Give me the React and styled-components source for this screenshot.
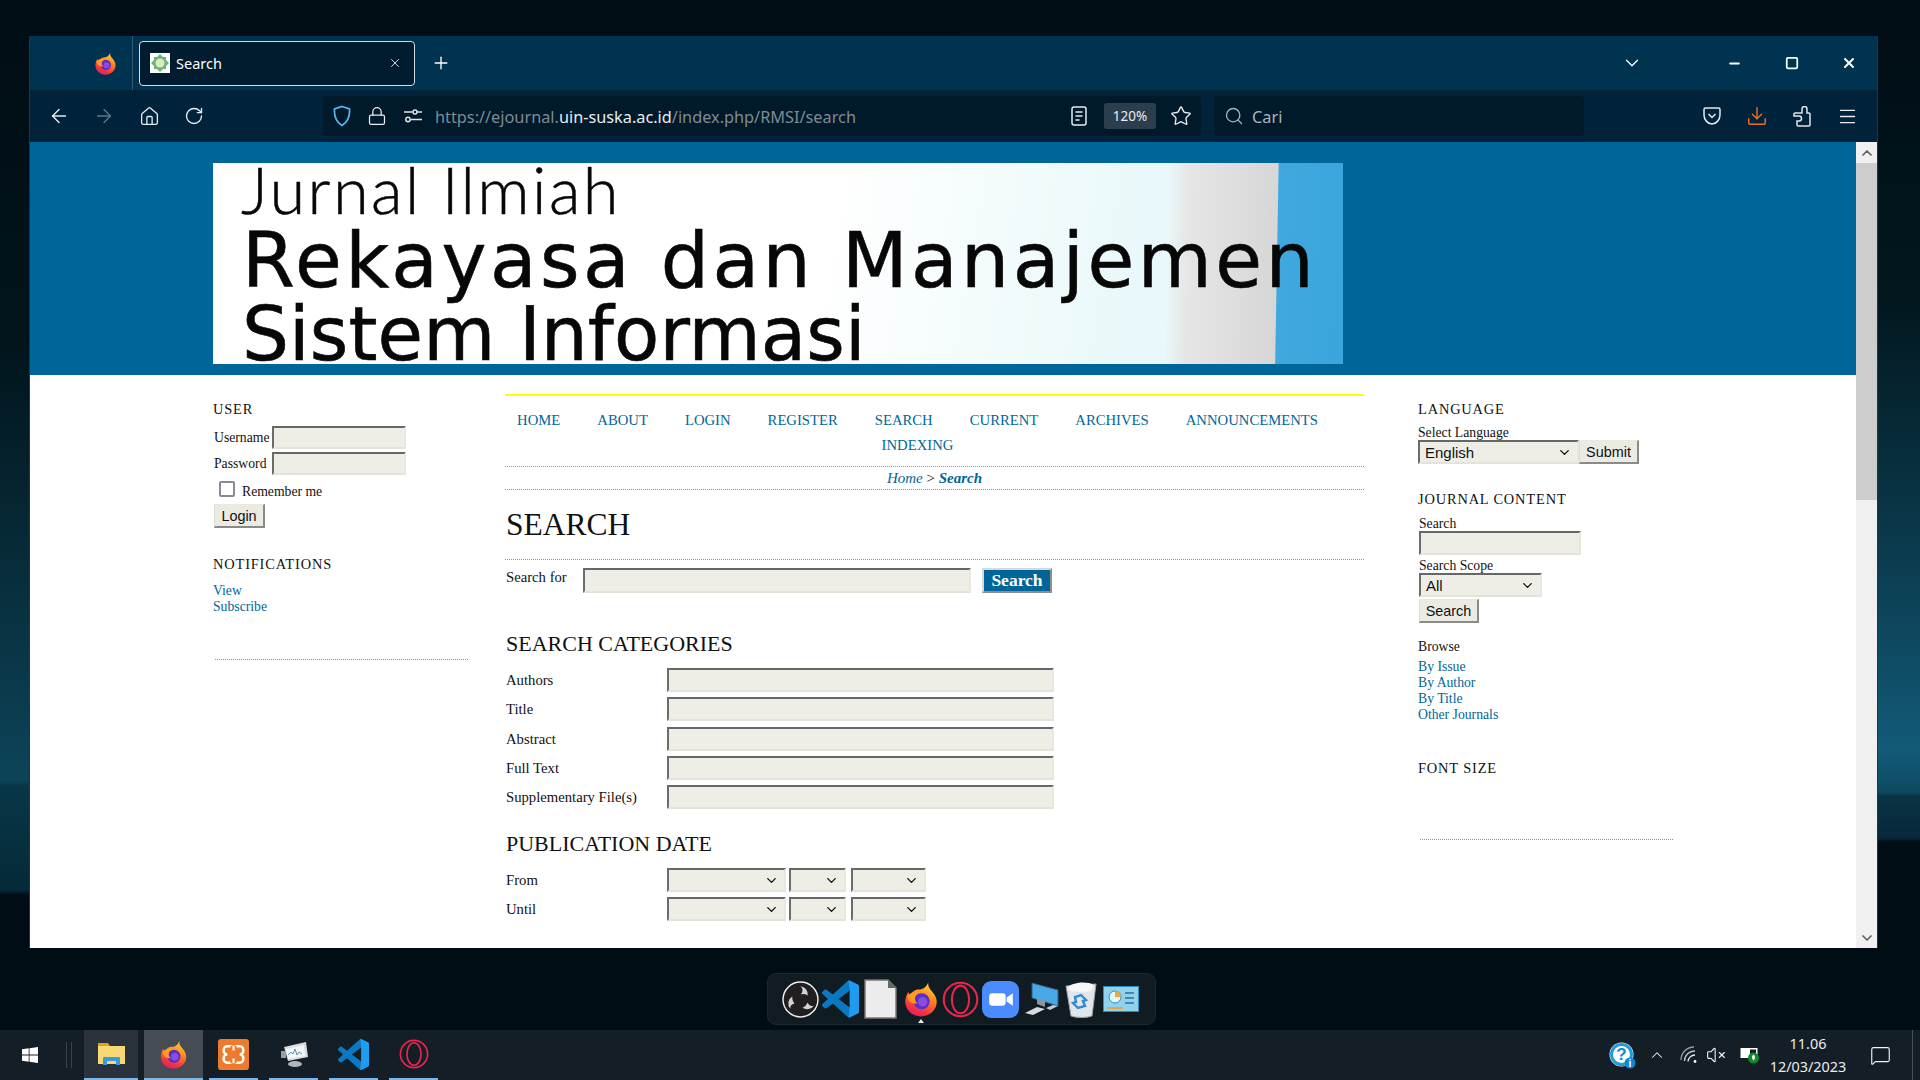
import React from 'react';
import styled, { createGlobalStyle } from 'styled-components';
import { ArrowLeft, ArrowRight, Home, RotateCw, Lock, Star, Search as SearchGlyph, Menu, Plus, X, ChevronDown, ChevronUp, Minus, Square, Download, MessageSquare, VolumeX } from 'lucide-react';

const GlobalStyle = createGlobalStyle`
  html, body { margin: 0; padding: 0; width: 1920px; height: 1080px; overflow: hidden; }
  body { font-family: "Liberation Serif", "Times New Roman", serif; color: #111; }
  * { box-sizing: border-box; }
`;

const Desktop = styled.div`
  position: relative;
  width: 1920px;
  height: 1080px;
  display: flex;
  flex-direction: column;
  background:
    linear-gradient(180deg, #010d15 0, #01141c 340px, #08303f 600px, #0d4459 780px, #083647 786px, #052a38 890px, #010d15 895px) left top / 50% 100% no-repeat,
    linear-gradient(180deg, #010d15 0, #02171f 300px, #0b3c4f 560px, #125a78 750px, #0e4a62 792px, #0a3444 796px, #07283a 838px, #010d15 842px) right top / 50% 100% no-repeat;
`;

const Workspace = styled.div`
  height: 1030px;
  padding: 36px 43px 0 30px;
`;

const Browser = styled.div`
  width: 1847px;
  height: 912px;
  display: flex;
  flex-direction: column;
  box-shadow: -1px 0 0 #2b3338, 1px 0 0 #2b3338;
`;

const TabStrip = styled.div`
  height: 54px;
  background: #003350;
  display: flex;
  align-items: center;
  color: #fff;
`;

const StripLogo = styled.div`
  width: 103px;
  height: 54px;
  padding-left: 64px;
  display: flex;
  align-items: center;
  border-right: 1px solid #33566f;
`;

const Tab = styled.div`
  width: 276px;
  height: 45px;
  margin-left: 6px;
  padding: 0 12px 0 10px;
  display: flex;
  align-items: center;
  background: #001c2e;
  border: 1px solid #d5dde2;
  border-radius: 4px;
  font: 14.5px "Noto Sans", "Open Sans", sans-serif;
`;

const Favicon = styled.div`
  width: 20px;
  height: 20px;
  margin-right: 6px;
  background: #fff;
  display: flex;
`;

const TabTitle = styled.span`
  flex: 1;
`;

const NewTab = styled.div`
  margin-left: 16px;
  display: flex;
`;

const StripRight = styled.div`
  margin-left: auto;
  display: flex;
  align-items: center;
`;

const AllTabs = styled.div`
  margin-right: 63px;
  display: flex;
`;

const WinButton = styled.div`
  width: 57px;
  display: flex;
  justify-content: center;
`;

const Toolbar = styled.div`
  height: 52px;
  background: #00223a;
  display: flex;
  align-items: center;
  color: #e6ecef;
`;

const NavButtons = styled.div`
  width: 293px;
  padding-left: 18px;
  display: flex;
  align-items: center;
  gap: 23px;
`;

const NavButton = styled.div`
  width: 22px;
  display: flex;
  justify-content: center;
  color: ${(p) => (p.$dim ? '#5e7688' : '#e6ecef')};
`;

const UrlBar = styled.div`
  width: 878px;
  height: 40px;
  background: #001a2b;
  border-radius: 4px;
  padding-left: 10px;
  display: flex;
  align-items: center;
`;

const UrlIcon = styled.div`
  display: flex;
  margin-right: ${(p) => p.$gap}px;
`;

const UrlText = styled.div`
  flex: 1;
  padding-top: 2px;
  font: 16.3px "Noto Sans", "Open Sans", sans-serif;
  color: #7f8b93;
  white-space: nowrap;
  b { font-weight: 400; color: #e8edf0; }
`;

const ZoomBadge = styled.div`
  width: 52px;
  height: 26px;
  margin: 0 14px 0 17px;
  background: #2b3e4e;
  border-radius: 3px;
  display: flex;
  align-items: center;
  justify-content: center;
  font: 13.5px "Noto Sans", "Open Sans", sans-serif;
  color: #e8edf0;
`;

const SearchBar = styled.div`
  width: 370px;
  height: 40px;
  margin-left: 13px;
  background: #001a2b;
  border-radius: 4px;
  padding-left: 10px;
  display: flex;
  align-items: center;
  gap: 8px;
  font: 16.3px "Noto Sans", "Open Sans", sans-serif;
  color: #a9b6be;
`;

const SearchHint = styled.span`
  padding-top: 2px;
`;

const ToolIcons = styled.div`
  margin-left: auto;
  padding-right: 18px;
  display: flex;
  align-items: center;
  gap: 21px;
`;

const ToolIcon = styled.div`
  width: 24px;
  display: flex;
  justify-content: center;
`;

const Viewport = styled.div`
  flex: 1;
  display: flex;
  min-height: 0;
`;

const Page = styled.div`
  flex: 1;
  background: #fff;
  min-width: 0;
`;

const Scrollbar = styled.div`
  width: 21px;
  background: #f0f0f0;
  display: flex;
  flex-direction: column;
  justify-content: space-between;
  position: relative;
`;

const ScrollArrow = styled.div`
  height: 21px;
  display: flex;
  align-items: center;
  justify-content: center;
  color: #606060;
`;

const ScrollThumb = styled.div`
  position: absolute;
  left: 0;
  right: 0;
  top: 21px;
  height: 337px;
  background: #cdcdcd;
`;

const Masthead = styled.div`
  height: 233px;
  background: #006699;
  padding: 21px 0 0 183px;
`;

const Banner = styled.div`
  width: 1130px;
  height: 201px;
  padding-left: 28px;
  display: flex;
  flex-direction: column;
  color: #070707;
  white-space: nowrap;
  background:
    linear-gradient(91deg, rgba(63,168,223,0) 1065px, #3fa8df 1066px, #3aa5dc 100%),
    linear-gradient(91deg, rgba(228,228,228,0) 955px, #e6e6e6 975px, #d6d6d6 1066px),
    linear-gradient(100deg, #fff 0, #fff 620px, #e9f8fa 930px);
`;

const BannerLine = styled.div`
  font-family: ${(p) => p.$font};
  font-size: ${(p) => p.$size}px;
  line-height: ${(p) => p.$lh}px;
  letter-spacing: ${(p) => p.$ls}px;
  font-weight: ${(p) => p.$weight || 400};
  margin-left: ${(p) => p.$ml || 0}px;
  -webkit-text-stroke: ${(p) => p.$stroke || 0}px #070707;
`;

const Columns = styled.div`
  display: grid;
  grid-template-columns: 292px 859px 1fr;
  padding: 0 0 0 183px;
`;

const Sidebar = styled.div`
  padding-top: 25px;
`;

const BlockTitle = styled.div`
  font-size: 14.4px;
  line-height: 18px;
  letter-spacing: 0.85px;
  margin: ${(p) => p.$mt || 0}px 0 ${(p) => p.$mb || 0}px;
`;

const SmallText = styled.div`
  font-size: 13.7px;
  line-height: 15px;
  margin-top: ${(p) => p.$mt || 0}px;
`;

const LinkList = styled.div`
  display: flex;
  flex-direction: column;
  font-size: 13.7px;
  line-height: 16px;
  color: #006699;
  margin-top: ${(p) => p.$mt || 0}px;
`;

const FormRow = styled.div`
  display: flex;
  align-items: center;
  margin-bottom: 3px;
`;

const SideLabel = styled.span`
  width: 59px;
  padding-left: 1px;
  font-size: 13.7px;
`;

const Field = styled.div`
  width: ${(p) => p.$w}px;
  height: ${(p) => p.$h || 24}px;
  background: #eeeee7;
  border-style: solid;
  border-width: 2px;
  border-color: #676767 #e8e8e0 #e3e3dc #6c6c6c;
  flex-shrink: 0;
`;

const SelectBox = styled(Field)`
  display: flex;
  align-items: center;
  justify-content: space-between;
  padding: 0 5px;
  font: 15px "Liberation Sans", Arial, sans-serif;
  color: #111;
`;

const CheckRow = styled.div`
  display: flex;
  align-items: flex-start;
  font-size: 13.7px;
  margin: 6px 0 4px 6px;
  gap: 7px;
`;

const CheckLabel = styled.span`
  margin-top: 3px;
  line-height: 16px;
`;

const CheckBox = styled.div`
  width: 16px;
  height: 16px;
  border: 2px solid #8a8a97;
  border-radius: 2px;
  background: #fff;
`;

const PlainButton = styled.div`
  width: ${(p) => p.$w}px;
  height: 24px;
  background: #ebebe4;
  border-style: solid;
  border-width: 1px 2px 2px 1px;
  border-color: #e9e9e2 #8a8a8a #8a8a8a #dcdcd5;
  display: flex;
  align-items: center;
  justify-content: center;
  font: 14.4px "Liberation Sans", Arial, sans-serif;
  color: #111;
  margin: ${(p) => p.$mt || 0}px 0 0 ${(p) => p.$ml || 0}px;
`;

const DottedRule = styled.div`
  border-top: 1px dotted #6a9fb8;
  margin: ${(p) => p.$m};
`;

const Main = styled.div`
  padding-top: 19px;
`;

const NavBlock = styled.div`
  border-top: 2px solid #ffff00;
  padding: 12px 0 0 3px;
  height: 72px;
  text-align: center;
  font-size: 14.7px;
  line-height: 25px;
  color: #006699;
`;

const NavLink = styled.span`
  display: inline-block;
  margin-right: 37px;
`;

const Crumbs = styled.div`
  height: 24px;
  border-top: 1px dotted #6a9fb8;
  border-bottom: 1px dotted #6a9fb8;
  text-align: center;
  font-size: 15px;
  line-height: 22px;
  font-style: italic;
  color: #006699;
  em { font-style: normal; color: #111; }
  b { font-weight: 700; }
`;

const PageTitle = styled.h1`
  margin: 0;
  font-size: 31.5px;
  line-height: 36px;
  font-weight: 400;
  color: #111;
  padding: 17px 0 16px 1px;
  border-bottom: 1px dotted #6a9fb8;
`;

const QueryRow = styled.div`
  display: flex;
  align-items: flex-start;
  padding: 8px 0 0 1px;
  font-size: 14.7px;
`;

const QueryLabel = styled.span`
  width: 77px;
  line-height: 18px;
`;

const GoButton = styled.div`
  width: 70px;
  height: 25px;
  margin-left: 11px;
  background: #006699;
  color: #fff;
  font-weight: 700;
  font-size: 17.5px;
  border: 2px solid;
  border-color: #d8d8d8 #8f8f8f #8f8f8f #d8d8d8;
  display: flex;
  align-items: center;
  justify-content: center;
`;

const SectionTitle = styled.h2`
  margin: ${(p) => p.$mt}px 0 ${(p) => p.$mb}px;
  padding-left: 1px;
  font-size: 22px;
  line-height: 26px;
  font-weight: 400;
  color: #111;
`;

const SearchGrid = styled.div`
  display: grid;
  grid-template-columns: 161px 1fr;
  row-gap: 5.25px;
  padding-left: 1px;
  align-items: center;
  font-size: 14.7px;
  line-height: 24px;
`;

const DateSelects = styled.div`
  display: flex;
  gap: 3px;
`;

const DateSelect = styled(SelectBox)`
  margin-right: ${(p) => p.$mr || 0}px;
  justify-content: flex-end;
`;

const RightSide = styled(Sidebar)`
  padding-left: 54px;
`;

const SideGroup = styled.div`
  padding-left: 1px;
`;

const Taskbar = styled.div`
  height: 50px;
  background: #141e27;
  display: flex;
  align-items: stretch;
`;

const StartButton = styled.div`
  width: 66px;
  display: flex;
  align-items: center;
  padding-left: 22px;
`;

const TaskDivider = styled.div`
  width: 18px;
  display: flex;
  justify-content: flex-start;
  align-items: center;
  &::before {
    content: '';
    width: 4px;
    height: 26px;
    border-left: 1px solid #3a434b;
    border-right: 1px solid #3a434b;
  }
`;

const TaskItem = styled.div`
  width: ${(p) => p.$w || 60}px;
  margin-right: ${(p) => p.$mr ?? 0}px;
  display: flex;
  align-items: center;
  justify-content: center;
  background: ${(p) => p.$bg || 'transparent'};
  border-bottom: 2px solid #76b9ed;
`;

const Tray = styled.div`
  margin-left: auto;
  display: flex;
  align-items: center;
  color: #f2f4f5;
`;

const TrayIcon = styled.div`
  display: flex;
  margin-right: ${(p) => p.$mr}px;
`;

const Clock = styled.div`
  width: 80px;
  text-align: center;
  font: 14.4px/23px "Noto Sans", "Open Sans", sans-serif;
  color: #e9ecee;
`;

const Notice = styled.div`
  width: 65px;
  display: flex;
  justify-content: center;
  border-right: 1px solid #4a5259;
  align-self: stretch;
  align-items: center;
  margin-right: 7px;
`;

const Dock = styled.div`
  position: absolute;
  left: 767px;
  top: 973px;
  width: 389px;
  height: 52px;
  background: #111b22;
  border: 1px solid #1d272f;
  border-radius: 9px;
  display: flex;
  align-items: center;
  padding-left: 14px;
  gap: 3px;
`;

const DockSlot = styled.div`
  width: 37px;
  display: flex;
  justify-content: center;
  position: relative;
`;

const DockPointer = styled.div`
  position: absolute;
  bottom: -6px;
  left: 50%;
  margin-left: -3px;
  border: 3px solid transparent;
  border-top-width: 0;
  border-bottom: 4px solid #e6e6e6;
`;

// Drawn icons
const Firefox = ({ size = 24 }) => (
  <svg width={size} height={size} viewBox="0 0 32 32">
    <defs>
      <linearGradient id="ffBody" x1="0.75" y1="0" x2="0.35" y2="1">
        <stop offset="0" stopColor="#ffd83a" />
        <stop offset="0.4" stopColor="#ff8a1e" />
        <stop offset="0.8" stopColor="#f5343f" />
        <stop offset="1" stopColor="#e31f64" />
      </linearGradient>
    </defs>
    <path d="M22.500 1c-.5 3.500 1 5.500 3.500 8.500 2.500 2.800 4 5.800 4 9 0 7.500-6.300 13-14 13S2 26 2 18.500c0-3 1-6.500 3-9 0 1.500.5 3 1.500 3.500C8 9 11 7.500 14 7.500c4 0 7-2.500 8.500-6.500z" fill="url(#ffBody)" />
    <circle cx="16.500" cy="18" r="7.200" fill="#5b2fc4" />
    <circle cx="17.500" cy="18.500" r="4.200" fill="#8b4be0" />
    <path d="M4 13c4-4 10-5.500 15-3-4 0-7 1-8 4-.8 2.500 0 4.500 2 6-5 .5-9.500-2-9-7z" fill="#ff9a26" />
  </svg>
);

const VSCode = ({ size = 24 }) => (
  <svg width={size} height={size} viewBox="0 0 24 24">
    <path d="M23.150 2.587L18.210.21a1.494 1.494 0 0 0-1.705.29l-9.460 8.630-4.120-3.128a.999.999 0 0 0-1.276.057L.327 7.261A1 1 0 0 0 .326 8.740L3.899 12 .326 15.260a1 1 0 0 0 .001 1.479L1.650 17.940a.999.999 0 0 0 1.276.057l4.120-3.128 9.460 8.630a1.492 1.492 0 0 0 1.704.29l4.942-2.377A1.500 1.500 0 0 0 24 20.060V3.939a1.500 1.500 0 0 0-.85-1.352zm-5.146 14.861L10.826 12l7.178-5.448v10.896z" fill="#0a78c2" />
    <path d="M17.200.1c.35-.05.7.0 1.010.11l4.940 2.377A1.500 1.500 0 0 1 24 3.939V20.060a1.500 1.500 0 0 1-.85 1.352l-4.940 2.377c-.32.110-.66.160-1.010.110L18.004 17.448V6.552z" fill="#1f9cf0" />
  </svg>
);

const Opera = ({ size = 24 }) => (
  <svg width={size} height={size} viewBox="0 0 32 32" fill="none" stroke="#e8254b" strokeWidth="1.800">
    <circle cx="16" cy="16" r="14.500" />
    <ellipse cx="16" cy="16" rx="7.500" ry="12" />
  </svg>
);

const Xampp = () => (
  <svg width="31" height="31" viewBox="0 0 30 30">
    <rect width="30" height="30" rx="3" fill="#ee7a2b" />
    <g fill="none" stroke="#fff" strokeWidth="2.400">
      <rect x="5.500" y="7" width="10" height="8" rx="3.500" />
      <rect x="14.500" y="7" width="10" height="8" rx="3.500" />
      <rect x="5.500" y="15" width="10" height="8" rx="3.500" />
      <rect x="14.500" y="15" width="10" height="8" rx="3.500" />
    </g>
    <rect x="9" y="11" width="12" height="8" fill="#ee7a2b" />
    <path d="M13 6.500v4M17 6.500v4M13 19.500v4M17 19.500v4" stroke="#ee7a2b" strokeWidth="2" />
  </svg>
);

const Folder = () => (
  <svg width="29" height="24" viewBox="0 0 29 24">
    <path d="M1 1h10l2 3H1z" fill="#e4a11b" />
    <rect x="1" y="4" width="27" height="18" fill="#f8d775" />
    <path d="M6 23v-7c0-1 1-1 1-1h15s1 0 1 1v7h-4v-4h-9v4z" fill="#3a9bdc" />
  </svg>
);

const Monitor = () => (
  <svg width="28" height="26" viewBox="0 0 28 26">
    <path d="M4 6l22-5 2 15-20 4z" fill="#d9dcde" />
    <path d="M6 8l18-4 1.500 11L8 18z" fill="#f3f6f7" />
    <path d="M8 14l3-3 2 2 2-5 2 6 2-3 3 2" fill="none" stroke="#5a93c8" strokeWidth="1" />
    <ellipse cx="15" cy="23" rx="7" ry="3" fill="#b4b7b9" />
    <rect x="1" y="10" width="5" height="7" fill="#9b9fa1" />
  </svg>
);

const Obs = () => (
  <svg width="37" height="37" viewBox="0 0 36 36">
    <circle cx="18" cy="18" r="17" fill="#231f20" stroke="#eee" strokeWidth="1.400" />
    <path d="M18 5a8 8 0 0 1 7 9 9 9 0 0 0-7-1 5 5 0 0 0 0-8zM31 24a8 8 0 0 1-11 2 9 9 0 0 0 5-5 5 5 0 0 0 6 3zM8 27a8 8 0 0 1 2-12 9 9 0 0 0 2 7 5 5 0 0 0-4 5z" fill="#d4d4d4" />
  </svg>
);

const FileIcon = () => (
  <svg width="33" height="40" viewBox="0 0 33 40">
    <path d="M1 1h23l8 8v30H1z" fill="#ececec" stroke="#777" strokeWidth="1.500" />
    <path d="M24 1l8 8h-8z" fill="#666" />
  </svg>
);

const ZoomIcon = () => (
  <svg width="37" height="37" viewBox="0 0 36 36">
    <rect width="36" height="36" rx="9" fill="#4a8cff" />
    <rect x="7" y="12" width="16" height="12" rx="3" fill="#fff" />
    <path d="M24 16l6-4v12l-6-4z" fill="#fff" />
  </svg>
);

const Computer = () => (
  <svg width="36" height="36" viewBox="0 0 36 36">
    <path d="M9 2l26 7v16L9 17z" fill="#4aa7e8" stroke="#2a5f84" strokeWidth="1" />
    <path d="M2 32l12-6 8 2-12 6z" fill="#d6dbe0" />
    <path d="M23 27l7-3 5 1-8 4z" fill="#c4cad0" />
    <path d="M14 17l8 3v6l-8-3z" fill="#8a97a2" />
  </svg>
);

const Recycle = () => (
  <svg width="32" height="37" viewBox="0 0 32 37">
    <path d="M1 5l30-2-4 32c-6 2-15 2-21 0z" fill="#e3e6e8" stroke="#9aa0a4" strokeWidth="1" />
    <path d="M3 6c5-5 20-6 26-2l-3 6c-6 1-15 1-21 0z" fill="#f7f7f7" />
    <path d="M16 14l5 5-3 1 2 5-7 2-5-5 3-1-1-5z" fill="none" stroke="#2f8bd8" strokeWidth="2.400" />
  </svg>
);

const ControlPanel = () => (
  <svg width="36" height="26" viewBox="0 0 36 26">
    <rect x="0.500" y="0.500" width="35" height="25" fill="#8fd2ee" stroke="#2d8ec0" />
    <circle cx="12" cy="11" r="6" fill="#e7f4fa" stroke="#2d8ec0" />
    <path d="M12 5a6 6 0 0 1 6 6h-6z" fill="#f2a53c" />
    <path d="M22 7h9M22 12h9M22 17h9" stroke="#2d6f96" strokeWidth="1.500" />
    <rect x="4" y="21" width="16" height="2" fill="#e8a34a" />
  </svg>
);

const Shield = () => (
  <svg width="18" height="22" viewBox="0 0 18 22" fill="none" stroke="#5ab4f5" strokeWidth="1.700">
    <path d="M9 1.500l7.500 2.500c.5 7-1.500 13-7.500 16.500C3 17 1 11 1.500 4z" />
  </svg>
);

const PermIcon = () => (
  <svg width="18" height="14" viewBox="0 0 18 14" fill="none" stroke="#dfe6ea" strokeWidth="1.500">
    <circle cx="11" cy="3" r="2" />
    <circle cx="4" cy="10.500" r="2.200" />
    <path d="M0 3h8.500M13 3h5M7 10.500h11" />
  </svg>
);

const Reader = () => (
  <svg width="16" height="20" viewBox="0 0 16 20" fill="none" stroke="#e6ecef" strokeWidth="1.500">
    <rect x="1" y="1" width="14" height="18" rx="2" />
    <path d="M4.500 6h7M4.500 10h7M4.500 14h4" />
  </svg>
);

const Pocket = () => (
  <svg width="18" height="18" viewBox="0 0 18 18" fill="none" stroke="#e6ecef" strokeWidth="1.500">
    <path d="M1 2.500c0-1 .5-1.500 1.500-1.500h13c1 0 1.500.5 1.500 1.500V8c0 5-4 9-8 9s-8-4-8-9z" />
    <path d="M5.500 7L9 10.500 12.500 7" />
  </svg>
);

const Extensions = () => (
  <svg width="20" height="21" viewBox="0 0 20 21" fill="none" stroke="#dfe6ea" strokeWidth="1.500">
    <path d="M10 7V3a2.500 2.500 0 0 1 5 0v4h2a1 1 0 0 1 1 1v11a1 1 0 0 1-1 1H6a1 1 0 0 1-1-1v-4h2a2.500 2.500 0 0 0 0-5H2V8a1 1 0 0 1 1-1z" />
  </svg>
);

const WinLogo = () => (
  <svg width="16" height="16" viewBox="0 0 16 16" fill="#fff">
    <path d="M0 2.300L6.700 1.300V7.600H0zM7.500 1.200L16 0V7.600H7.500zM0 8.400H6.700V14.700L0 13.700zM7.500 8.400H16V16L7.500 14.800z" />
  </svg>
);

const HelpIcon = () => (
  <svg width="27" height="27" viewBox="0 0 27 27">
    <circle cx="12.500" cy="12.500" r="12" fill="#fff" />
    <circle cx="12.500" cy="12.500" r="10" fill="none" stroke="#1e9be0" strokeWidth="3" />
    <text x="12.500" y="18" textAnchor="middle" fontSize="17" fontWeight="700" fill="#1287cf" fontFamily="Liberation Sans">?</text>
    <circle cx="21" cy="21" r="5.500" fill="#1287cf" />
    <text x="21" y="25" textAnchor="middle" fontSize="10" fontWeight="700" fill="#fff" fontFamily="Liberation Sans">i</text>
  </svg>
);

const Signal = () => (
  <svg width="18" height="18" viewBox="0 0 18 18" fill="none" stroke="#e8ecee" strokeWidth="1.300">
    <path d="M1 14A13 13 0 0 1 14 1" opacity="0.6" />
    <path d="M4.500 15A10 10 0 0 1 15 5" opacity="0.8" />
    <path d="M8 15.500A7 7 0 0 1 15 9" />
    <circle cx="15" cy="15.500" r="1.400" fill="#fff" stroke="none" />
  </svg>
);

const BatteryIcon = () => (
  <svg width="20" height="20" viewBox="0 0 20 20">
    <rect x="0.500" y="3" width="17" height="10" fill="#fff" />
    <rect x="10" y="4.500" width="6" height="7" fill="#141e27" />
    <circle cx="13.500" cy="13" r="5.500" fill="#0f8a2d" />
    <path d="M13.500 9.500c2 1.500 2 4 0 6-2-2-2-4.500 0-6z" fill="#fff" />
  </svg>
);

const SearchFavicon = () => (
  <svg width="20" height="20" viewBox="0 0 20 20">
    <path d="M10 1l3 3h3v3l3 3-3 3v3h-3l-3 3-3-3H4v-3l-3-3 3-3V4h3z" fill="#6fb27a" />
    <circle cx="10" cy="10" r="4.500" fill="#d9ecc4" />
  </svg>
);

const navItems = ['HOME', 'ABOUT', 'LOGIN', 'REGISTER', 'SEARCH', 'CURRENT', 'ARCHIVES', 'ANNOUNCEMENTS', 'INDEXING'];
const fieldRows = ['Authors', 'Title', 'Abstract', 'Full Text', 'Supplementary File(s)'];
const dateRows = ['From', 'Until'];

const App = () => {
  return (
    <>
      <GlobalStyle />
      <Desktop>
        <Workspace>
          <Browser>
            <TabStrip>
              <StripLogo><Firefox size={23} /></StripLogo>
              <Tab>
                <Favicon><SearchFavicon /></Favicon>
                <TabTitle>Search</TabTitle>
                <X size={14} strokeWidth={1.400} />
              </Tab>
              <NewTab><Plus size={20} strokeWidth={1.600} /></NewTab>
              <StripRight>
                <AllTabs><ChevronDown size={22} strokeWidth={1.400} /></AllTabs>
                <WinButton><Minus size={15} strokeWidth={3} /></WinButton>
                <WinButton><Square size={14} strokeWidth={3} /></WinButton>
                <WinButton><X size={16} strokeWidth={3} /></WinButton>
              </StripRight>
            </TabStrip>
            <Toolbar>
              <NavButtons>
                <NavButton><ArrowLeft size={22} strokeWidth={1.500} /></NavButton>
                <NavButton $dim><ArrowRight size={22} strokeWidth={1.500} /></NavButton>
                <NavButton><Home size={21} strokeWidth={1.500} /></NavButton>
                <NavButton><RotateCw size={20} strokeWidth={1.600} /></NavButton>
              </NavButtons>
              <UrlBar>
                <UrlIcon $gap={16}><Shield /></UrlIcon>
                <UrlIcon $gap={17}><Lock size={20} strokeWidth={1.500} /></UrlIcon>
                <UrlIcon $gap={13}><PermIcon /></UrlIcon>
                <UrlText>https://ejournal.<b>uin-suska.ac.id</b>/index.php/RMSI/search</UrlText>
                <Reader />
                <ZoomBadge>120%</ZoomBadge>
                <Star size={22} strokeWidth={1.500} />
                <UrlIcon $gap={9} />
              </UrlBar>
              <SearchBar><SearchGlyph size={20} strokeWidth={1.600} /><SearchHint>Cari</SearchHint></SearchBar>
              <ToolIcons>
                <ToolIcon><Pocket /></ToolIcon>
                <ToolIcon><Download size={22} strokeWidth={1.600} color="#e8702a" /></ToolIcon>
                <ToolIcon><Extensions /></ToolIcon>
                <ToolIcon><Menu size={21} strokeWidth={1.500} /></ToolIcon>
              </ToolIcons>
            </Toolbar>
            <Viewport>
              <Page>
                <Masthead>
                  <Banner>
                    <BannerLine $font="Lato, sans-serif" $size={65} $lh={52} $ls={2.400} $weight={300} $stroke={0.500}>Jurnal Ilmiah</BannerLine>
                    <BannerLine $font="'DejaVu Sans', sans-serif" $size={76} $lh={92} $ls={3.500} $ml={1} $stroke={0.600}>Rekayasa dan Manajemen</BannerLine>
                    <BannerLine $font="'DejaVu Sans', sans-serif" $size={74} $lh={55} $ls={0.100} $ml={1} $stroke={0.600}>Sistem Informasi</BannerLine>
                  </Banner>
                </Masthead>
                <Columns>
                  <Sidebar>
                    <BlockTitle $mb={8}>USER</BlockTitle>
                    <FormRow>
                      <SideLabel>Username</SideLabel>
                      <Field $w={134} $h={23} />
                    </FormRow>
                    <FormRow>
                      <SideLabel>Password</SideLabel>
                      <Field $w={134} $h={23} />
                    </FormRow>
                    <CheckRow><CheckBox /><CheckLabel>Remember me</CheckLabel></CheckRow>
                    <PlainButton $w={51} $ml={1}>Login</PlainButton>
                    <BlockTitle $mt={27} $mb={10}>NOTIFICATIONS</BlockTitle>
                    <LinkList>
                      <span>View</span>
                      <span>Subscribe</span>
                    </LinkList>
                    <DottedRule $m="44px 37px 0 2px" />
                  </Sidebar>
                  <Main>
                    <NavBlock>
                      {navItems.map((item) => (
                        <NavLink key={item}>{item}</NavLink>
                      ))}
                    </NavBlock>
                    <Crumbs>
                      Home <em>&gt;</em> <b>Search</b>
                    </Crumbs>
                    <PageTitle>SEARCH</PageTitle>
                    <QueryRow>
                      <QueryLabel>Search for</QueryLabel>
                      <Field $w={388} $h={25} />
                      <GoButton>Search</GoButton>
                    </QueryRow>
                    <SectionTitle $mt={38} $mb={11}>SEARCH CATEGORIES</SectionTitle>
                    <SearchGrid>
                      {fieldRows.map((label) => (
                        <React.Fragment key={label}>
                          <span>{label}</span>
                          <Field $w={387} />
                        </React.Fragment>
                      ))}
                    </SearchGrid>
                    <SectionTitle $mt={22} $mb={11}>PUBLICATION DATE</SectionTitle>
                    <SearchGrid>
                      {dateRows.map((label) => (
                        <React.Fragment key={label}>
                          <span>{label}</span>
                          <DateSelects>
                            <DateSelect $w={119}><ChevronDown size={15} strokeWidth={2.200} /></DateSelect>
                            <DateSelect $w={57} $mr={2}><ChevronDown size={15} strokeWidth={2.200} /></DateSelect>
                            <DateSelect $w={75}><ChevronDown size={15} strokeWidth={2.200} /></DateSelect>
                          </DateSelects>
                        </React.Fragment>
                      ))}
                    </SearchGrid>
                  </Main>
                  <RightSide>
                    <BlockTitle $mb={7}>LANGUAGE</BlockTitle>
                    <SmallText>Select Language</SmallText>
                    <FormRow>
                      <SelectBox $w={161}>English<ChevronDown size={15} strokeWidth={2.200} /></SelectBox>
                      <PlainButton $w={60}>Submit</PlainButton>
                    </FormRow>
                    <BlockTitle $mt={26} $mb={8}>JOURNAL CONTENT</BlockTitle>
                    <SideGroup>
                      <SmallText>Search</SmallText>
                      <Field $w={162} />
                      <SmallText $mt={3}>Search Scope</SmallText>
                      <SelectBox $w={123}>All<ChevronDown size={15} strokeWidth={2.200} /></SelectBox>
                      <PlainButton $w={60} $mt={2}>Search</PlainButton>
                    </SideGroup>
                    <SmallText $mt={16}>Browse</SmallText>
                    <LinkList $mt={5}>
                      <span>By Issue</span>
                      <span>By Author</span>
                      <span>By Title</span>
                      <span>Other Journals</span>
                    </LinkList>
                    <BlockTitle $mt={36}>FONT SIZE</BlockTitle>
                    <DottedRule $m="62px 183px 0 2px" />
                  </RightSide>
                </Columns>
              </Page>
              <Scrollbar>
                <ScrollThumb />
                <ScrollArrow><ChevronUp size={16} strokeWidth={2.600} /></ScrollArrow>
                <ScrollArrow><ChevronDown size={16} strokeWidth={2.600} /></ScrollArrow>
              </Scrollbar>
            </Viewport>
          </Browser>
        </Workspace>
        <Dock>
          <DockSlot><Obs /></DockSlot>
          <DockSlot><VSCode size={38} /></DockSlot>
          <DockSlot><FileIcon /></DockSlot>
          <DockSlot><Firefox size={36} /><DockPointer /></DockSlot>
          <DockSlot><Opera size={39} /></DockSlot>
          <DockSlot><ZoomIcon /></DockSlot>
          <DockSlot><Computer /></DockSlot>
          <DockSlot><Recycle /></DockSlot>
          <DockSlot><ControlPanel /></DockSlot>
        </Dock>
        <Taskbar>
          <StartButton><WinLogo /></StartButton>
          <TaskDivider />
          <TaskItem $w={54} $mr={6} $bg="#2a333c"><Folder /></TaskItem>
          <TaskItem $w={59} $mr={6} $bg="#454c53"><Firefox size={29} /></TaskItem>
          <TaskItem $w={49} $mr={11}><Xampp /></TaskItem>
          <TaskItem $w={49} $mr={11}><Monitor /></TaskItem>
          <TaskItem $w={49} $mr={11}><VSCode size={31} /></TaskItem>
          <TaskItem $w={49}><Opera size={30} /></TaskItem>
          <Tray>
            <TrayIcon $mr={12}><HelpIcon /></TrayIcon>
            <TrayIcon $mr={14}><ChevronUp size={18} strokeWidth={1.400} /></TrayIcon>
            <TrayIcon $mr={8}><Signal /></TrayIcon>
            <TrayIcon $mr={14}><VolumeX size={20} strokeWidth={1.300} /></TrayIcon>
            <TrayIcon $mr={8}><BatteryIcon /></TrayIcon>
            <Clock>11.06<br />12/03/2023</Clock>
            <Notice><MessageSquare size={21} strokeWidth={1.300} /></Notice>
          </Tray>
        </Taskbar>
      </Desktop>
    </>
  );
};

export default App;
